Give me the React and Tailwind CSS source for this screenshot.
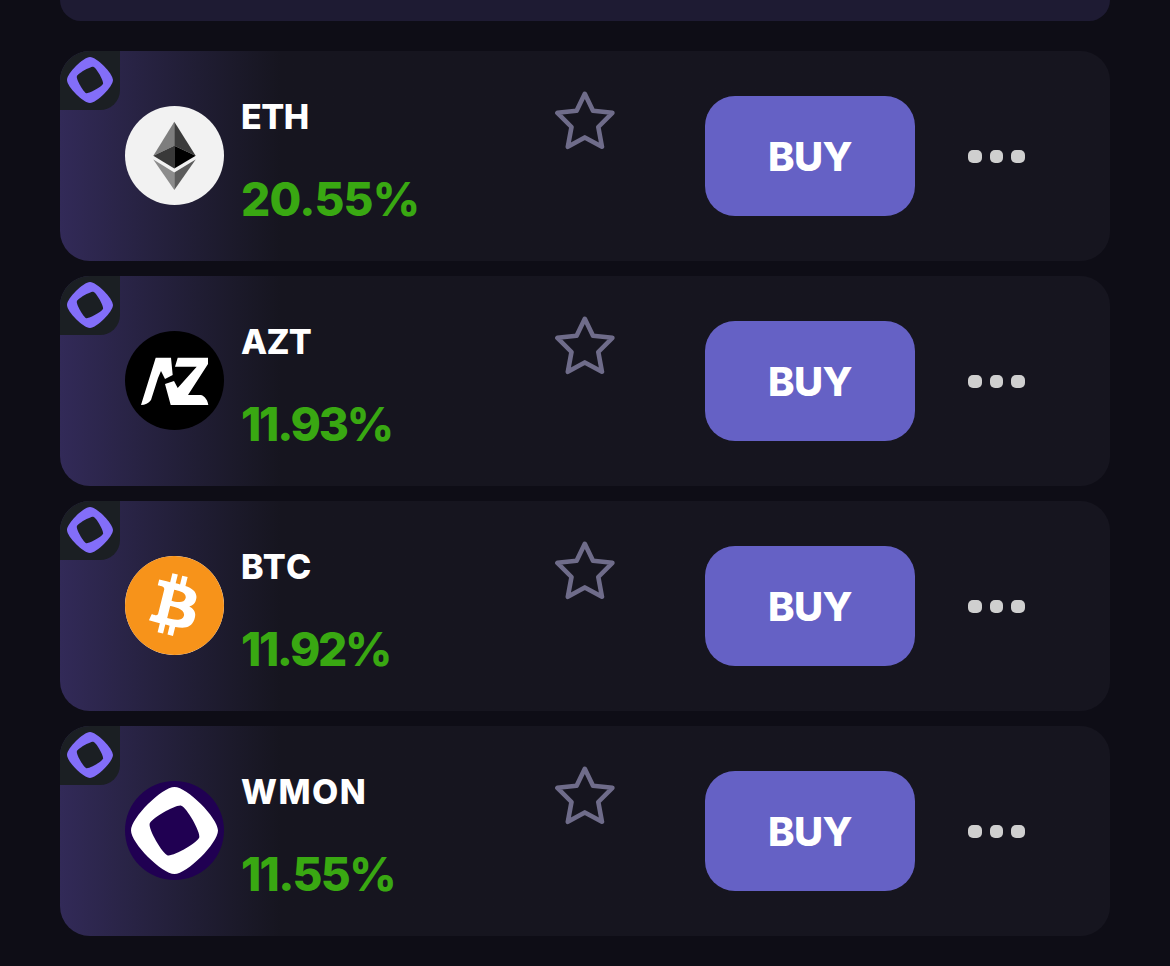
import React from "react";
import { SiBitcoin } from "react-icons/si";

const MONAD = "M16 0C11.38 0 0 11.38 0 16s11.38 16 16 16 16-11.38 16-16S20.62 0 16 0Zm-2.49 25.15c-1.95-.53-7.18-9.68-6.65-11.62.53-1.95 9.68-7.18 11.62-6.65 1.95.53 7.18 9.68 6.65 11.62-.53 1.95-9.68 7.18-11.62 6.65Z";

function Eth() {
  return (
    <div className="w-[99px] h-[99px] -mt-[1px] rounded-full bg-[#f2f2f2] shrink-0">
      <svg viewBox="0 0 99 99" className="w-[99px] h-[99px]">
        <polygon points="49.3,15.7 28.3,49.7 49.3,39.7" fill="#7e7e7e" />
        <polygon points="49.3,15.7 70.7,49.7 49.3,39.7" fill="#3c3c3c" />
        <polygon points="28.3,49.7 49.3,39.7 49.3,62.5" fill="#393939" />
        <polygon points="70.7,49.7 49.3,39.7 49.3,62.5" fill="#000000" />
        <polygon points="28.3,53.5 49.3,66.5 49.3,84" fill="#8c8c8c" />
        <polygon points="70.7,53.5 49.3,66.5 49.3,84" fill="#5c5c5c" />
      </svg>
    </div>
  );
}

function Azt() {
  return (
    <div className="w-[99px] h-[99px] -mt-[1px] rounded-full bg-black shrink-0">
      <svg viewBox="0 0 99 99" className="w-[99px] h-[99px]">
        <path d="M30.7 26.7H46L47.7 44L40 48L36 40L33 47L26 69C23.5 72.5 20 74 16 74Z" fill="#fff" />
        <path d="M52.7 26.7H83V33L63 64H76C80 65 83 70 83.3 74H45.7L40 53L49 50L52.7 57L71.7 35.7H50Z" fill="#fff" />
      </svg>
    </div>
  );
}

function Btc() {
  return (
    <div className="relative w-[99px] h-[99px] -mt-[1px] rounded-full bg-white shrink-0">
      <SiBitcoin size={99} color="#f7931a" className="block" />
    </div>
  );
}

function Wmon() {
  return (
    <div className="flex items-center justify-center w-[99px] h-[99px] -mt-[1px] rounded-full bg-[#200052] shrink-0">
      <svg viewBox="0 0 32 32" className="w-[87px] h-[87px]">
        <path d={MONAD} fill="#fff" />
      </svg>
    </div>
  );
}

function Row({ sym, pct, Icon, symClass, pctClass }) {
  return (
    <div className="relative flex items-center h-[210px] rounded-[30px] bg-gradient-to-r from-[#322a58] from-0% to-[#16151f] to-[21%] pl-[65px]">
      <div className="absolute left-0 top-0 flex items-center justify-center w-[60px] h-[59px] rounded-tl-[30px] rounded-br-[20px] bg-[#1b1f23]">
        <svg viewBox="0 0 32 32" className="w-[46px] h-[46px] -mt-[1px]">
          <path d={MONAD} fill="#836ef9" />
        </svg>
      </div>
      <Icon />
      <div className="flex flex-col w-[331px] pl-[17px] font-['Inter','Liberation_Sans',sans-serif] font-extrabold">
        <div className={"h-[82px] pt-[12px] text-[34px] leading-[34px] text-white " + symClass}>{sym}</div>
        <div className={"h-[50px] mt-[4px] text-[46px] leading-[50px] text-[#39a812] " + pctClass}>{pct}</div>
      </div>
      <svg viewBox="0 0 60 60" className="self-start mt-[40px] w-[60px] h-[60px] shrink-0" fill="none" stroke="#6f6c8a" strokeWidth="4.6" strokeLinejoin="round">
        <polygon points="29.8,2.8 38,19.8 57.4,21.8 43.3,36 47,55.8 29.8,46.4 12.8,55.8 16.5,36 2.4,21.8 21.6,19.8" />
      </svg>
      <button className="ml-[90px] w-[210px] h-[120px] pt-[1px] rounded-[30px] bg-[#6561c5] text-white text-[40px] font-extrabold tracking-[-0.5px] font-['Inter','Liberation_Sans',sans-serif] shrink-0">
        BUY
      </button>
      <div className="ml-[53px] mt-[1px] flex gap-[8px]">
        <span className="w-[13.5px] h-[13.5px] rounded-[5px] bg-[#cfcfcf]" />
        <span className="w-[13.5px] h-[13.5px] rounded-[5px] bg-[#cfcfcf]" />
        <span className="w-[13.5px] h-[13.5px] rounded-[5px] bg-[#cfcfcf]" />
      </div>
    </div>
  );
}

export default function App() {
  return (
    <div className="min-h-[966px] bg-[#0e0d16] px-[60px]">
      <div className="h-[21px] rounded-b-[25px] bg-[#1e1b33]" />
      <div className="flex flex-col gap-[15px] pt-[30px]">
        <Row sym="ETH" pct="20.55%" Icon={Eth} symClass="tracking-[-0.5px]" pctClass="tracking-[-0.8px]" />
        <Row sym="AZT" pct="11.93%" Icon={Azt} symClass="tracking-[-0.7px]" pctClass="tracking-[-2.2px]" />
        <Row sym="BTC" pct="11.92%" Icon={Btc} symClass="tracking-[1.2px]" pctClass="tracking-[-2.4px]" />
        <Row sym="WMON" pct="11.55%" Icon={Wmon} symClass="tracking-[1.5px]" pctClass="tracking-[-1.7px]" />
      </div>
    </div>
  );
}
